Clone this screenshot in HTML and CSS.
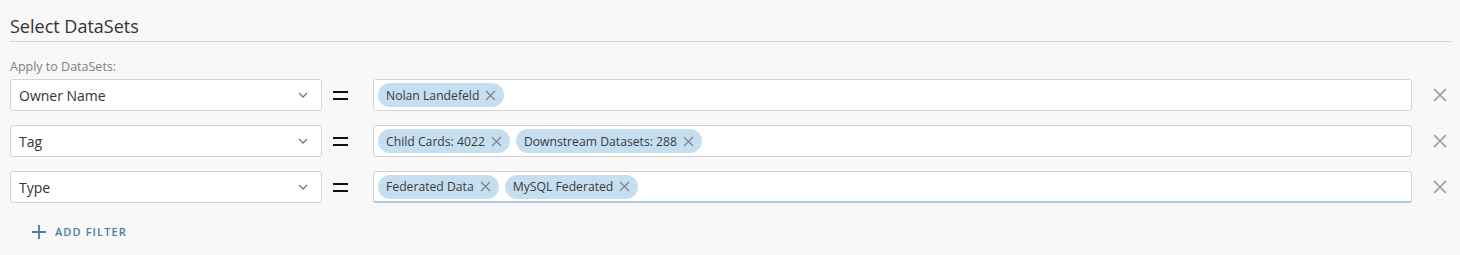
FILE: index.html
```html
<!DOCTYPE html>
<html>
<head>
<meta charset="utf-8">
<link rel="stylesheet" href="styles.css">
</head>
<body>
<div class="panel">
  <h2 class="title">Select DataSets</h2>
  <div class="label">Apply to DataSets:</div>
  <div class="rows">
    <div class="row">
      <div class="select"><span>Owner Name</span><svg class="chev" width="10" height="6" viewBox="0 0 10 6"><path d="M1 1l4 4 4-4" fill="none" stroke="#777" stroke-width="1.3"/></svg></div>
      <div class="eq"><i></i><i></i></div>
      <div class="input">
        <span class="chip">Nolan Landefeld<svg class="cx" width="11" height="11" viewBox="0 0 11 11"><path d="M1 1l9 9M10 1l-9 9" stroke="#808080" stroke-width="1.2"/></svg></span>
      </div>
      <svg class="rm" width="14" height="14" viewBox="0 0 14 14"><path d="M1 1l12 12M13 1L1 13" stroke="#999" stroke-width="1.6"/></svg>
    </div>
    <div class="row">
      <div class="select"><span>Tag</span><svg class="chev" width="10" height="6" viewBox="0 0 10 6"><path d="M1 1l4 4 4-4" fill="none" stroke="#777" stroke-width="1.3"/></svg></div>
      <div class="eq"><i></i><i></i></div>
      <div class="input">
        <span class="chip">Child Cards: 4022<svg class="cx" width="11" height="11" viewBox="0 0 11 11"><path d="M1 1l9 9M10 1l-9 9" stroke="#808080" stroke-width="1.2"/></svg></span>
        <span class="chip">Downstream Datasets: 288<svg class="cx" width="11" height="11" viewBox="0 0 11 11"><path d="M1 1l9 9M10 1l-9 9" stroke="#808080" stroke-width="1.2"/></svg></span>
      </div>
      <svg class="rm" width="14" height="14" viewBox="0 0 14 14"><path d="M1 1l12 12M13 1L1 13" stroke="#999" stroke-width="1.6"/></svg>
    </div>
    <div class="row">
      <div class="select"><span>Type</span><svg class="chev" width="10" height="6" viewBox="0 0 10 6"><path d="M1 1l4 4 4-4" fill="none" stroke="#777" stroke-width="1.3"/></svg></div>
      <div class="eq"><i></i><i></i></div>
      <div class="input focused">
        <span class="chip">Federated Data<svg class="cx" width="11" height="11" viewBox="0 0 11 11"><path d="M1 1l9 9M10 1l-9 9" stroke="#808080" stroke-width="1.2"/></svg></span>
        <span class="chip">MySQL Federated<svg class="cx" width="11" height="11" viewBox="0 0 11 11"><path d="M1 1l9 9M10 1l-9 9" stroke="#808080" stroke-width="1.2"/></svg></span>
      </div>
      <svg class="rm" width="14" height="14" viewBox="0 0 14 14"><path d="M1 1l12 12M13 1L1 13" stroke="#999" stroke-width="1.6"/></svg>
    </div>
  </div>
  <div class="add"><svg width="14" height="14" viewBox="0 0 14 14"><path d="M7 0v14M0 7h14" stroke="#4d7ba3" stroke-width="1.8"/></svg><span>ADD FILTER</span></div>
</div>
</body>
</html>
```

FILE: styles.css
```css
html, body {
  margin: 0;
  padding: 0;
  background: #f8f8f8;
  font-family: "Open Sans", "Liberation Sans", sans-serif;
  color: #333;
}
.panel {
  padding: 12px 9px 0 10px;
}
.title {
  margin: 0;
  font-size: 18px;
  font-weight: 400;
  line-height: 28px;
  color: #333;
  padding-bottom: 1px;
  border-bottom: 1px solid #d6d6d6;
}
.label {
  margin-top: 17px;
  font-size: 12.5px;
  line-height: 16px;
  color: #808080;
}
.rows {
  margin-top: 4px;
  display: flex;
  flex-direction: column;
  gap: 14px;
}
.row {
  display: flex;
  align-items: center;
  height: 32px;
}
.select {
  box-sizing: border-box;
  width: 312px;
  height: 32px;
  background: #fff;
  border: 1px solid #d4d4d4;
  border-radius: 3px;
  display: flex;
  align-items: center;
  justify-content: space-between;
  padding: 0 13px 0 8px;
  font-size: 14px;
  color: #333;
}
.chev { display: block; }
.eq {
  width: 51px;
  display: flex;
  flex-direction: column;
  align-items: flex-start;
  padding-left: 11px;
  box-sizing: border-box;
  gap: 5px;
}
.eq i {
  display: block;
  width: 15px;
  height: 2px;
  background: #111;
}
.input {
  box-sizing: border-box;
  flex: 1;
  height: 32px;
  background: #fff;
  border: 1px solid #d4d4d4;
  border-radius: 3px;
  display: flex;
  align-items: center;
  gap: 6px;
  padding-left: 4px;
}
.input.focused {
  border-bottom: 2px solid #a9cbe6;
}
.chip {
  display: inline-flex;
  align-items: center;
  height: 24px;
  border-radius: 12px;
  background: #c6dff0;
  font-size: 12.2px;
  color: #3a3a3a;
  padding: 0 8px 0 8px;
  gap: 6px;
}
.cx { display: block; }
.rm {
  margin-left: 21px;
  margin-right: 4px;
  display: block;
}
.add {
  margin-top: 21px;
  margin-left: 22px;
  display: flex;
  align-items: center;
  gap: 9px;
  color: #4d7ba3;
  font-size: 11px;
  font-weight: 600;
  letter-spacing: 1.1px;
}
.add svg { display: block; }
```
